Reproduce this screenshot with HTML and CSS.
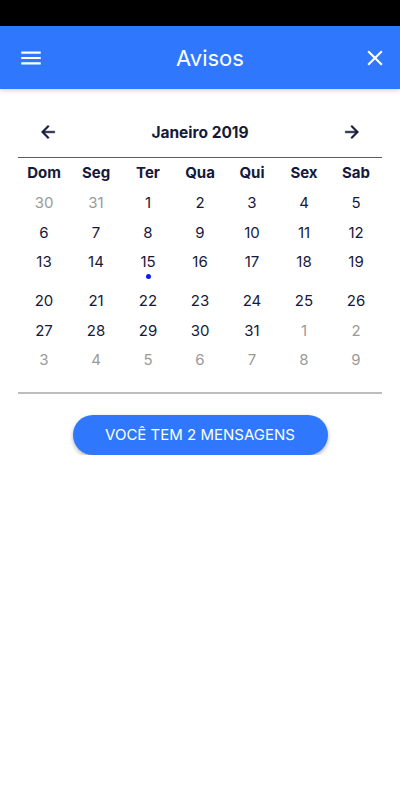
FILE: index.html
```html
<!DOCTYPE html>
<html>
<head>
  <title>Avisos</title>
  <link rel="stylesheet" href="styles.css">
</head>
<body>
  <div class="status-bar"></div>

  <header class="app-bar">
    <button class="icon-btn">
      <svg width="26" height="26" viewBox="0 0 24 24"><path d="M3 18h18v-2H3v2zm0-5h18v-2H3v2zm0-7v2h18V6H3z" fill="#fff"/></svg>
    </button>
    <h1>Avisos</h1>
    <button class="icon-btn">
      <svg width="26" height="26" viewBox="0 0 24 24"><path d="M19 6.41L17.59 5 12 10.59 6.41 5 5 6.41 10.59 12 5 17.59 6.41 19 12 13.41 17.59 19 19 17.59 13.41 12z" fill="#fff"/></svg>
    </button>
  </header>

  <main>
    <section class="calendar">
      <div class="month-bar">
        <button class="nav-btn">
          <svg width="20" height="20" viewBox="0 0 24 24"><path d="M20 11H7.83l5.59-5.59L12 4l-8 8 8 8 1.41-1.41L7.83 13H20v-2z" fill="#16193a" stroke="#16193a" stroke-width="0.6"/></svg>
        </button>
        <h2>Janeiro 2019</h2>
        <button class="nav-btn">
          <svg width="20" height="20" viewBox="0 0 24 24"><path d="M12 4l-1.41 1.41L16.17 11H4v2h12.17l-5.58 5.59L12 20l8-8z" fill="#16193a" stroke="#16193a" stroke-width="0.6"/></svg>
        </button>
      </div>

      <div class="weekdays">
        <span>Dom</span><span>Seg</span><span>Ter</span><span>Qua</span><span>Qui</span><span>Sex</span><span>Sab</span>
      </div>

      <div class="days" id="days"></div>
    </section>

    <div class="actions">
      <button class="messages-btn">VOCÊ TEM 2 MENSAGENS</button>
    </div>
  </main>

  <script>
    // Build the January 2019 grid (starts on Tuesday)
    var days = document.getElementById('days');
    var cells = [];
    cells.push({ n: 30, other: true }, { n: 31, other: true });
    for (var i = 1; i <= 31; i++) {
      cells.push({ n: i, other: false, event: i === 15 });
    }
    var next = 1;
    while (cells.length < 42) {
      cells.push({ n: next++, other: true });
    }

    for (var w = 0; w < 6; w++) {
      var row = document.createElement('div');
      row.className = 'week';
      var hasEvent = false;
      for (var d = 0; d < 7; d++) {
        var c = cells[w * 7 + d];
        var cell = document.createElement('div');
        cell.className = 'day' + (c.other ? ' other' : '');
        cell.innerHTML = '<span>' + c.n + '</span>';
        if (c.event) {
          cell.innerHTML += '<i class="dot"></i>';
          hasEvent = true;
        }
        row.appendChild(cell);
      }
      if (hasEvent) row.className += ' has-event';
      days.appendChild(row);
    }
  </script>
</body>
</html>
```

FILE: styles.css
```css
body {
  font-family: Inter, "Noto Sans", sans-serif;
  margin: 0;
  padding: 0;
  background-color: #FFFFFF;
  color: #16193a;
}

.status-bar {
  height: 26px;
  background-color: #000000;
}

.app-bar {
  height: 63px;
  background-color: #2f78fd;
  display: flex;
  align-items: center;
  justify-content: space-between;
  padding: 0 12px 0 18px;
  box-shadow: 0 2px 4px rgba(0, 0, 0, 0.15);
  position: relative;
}

.app-bar h1 {
  margin: 0;
  font-size: 22px;
  font-weight: 400;
  color: #FFFFFF;
  padding-left: 14px;
}

.icon-btn {
  background: none;
  border: none;
  padding: 0;
  width: 26px;
  height: 26px;
  display: flex;
  align-items: center;
  justify-content: center;
}

main {
  padding: 0 18px;
}

.calendar {
  padding-top: 31px;
  border-bottom: 2px solid #bdbdbd;
}

.month-bar {
  display: flex;
  align-items: center;
  justify-content: space-between;
  height: 24px;
  padding: 0 20px;
  border-bottom: 1px solid #5c5c5c;
  padding-bottom: 13px;
}

.month-bar h2 {
  margin: 0;
  font-size: 15.5px;
  font-weight: 700;
  padding-left: 0;
}

.nav-btn {
  background: none;
  border: none;
  padding: 0;
  display: flex;
}

.weekdays,
.week {
  display: grid;
  grid-template-columns: repeat(7, 1fr);
  text-align: center;
}

.weekdays {
  height: 29px;
  align-items: center;
  font-size: 15px;
  font-weight: 700;
  padding-bottom: 1px;
}

.days {
  padding-bottom: 17px;
}

.week {
  height: 29.5px;
  align-items: center;
  font-size: 15px;
}

.week.has-event {
  height: 39px;
  align-items: start;
}

.week.has-event .day {
  padding-top: 5px;
}

.day {
  display: flex;
  flex-direction: column;
  align-items: center;
}

.day.other {
  color: #9a9a9a;
}

.dot {
  width: 5px;
  height: 5px;
  border-radius: 50%;
  background-color: #0c1bf0;
  margin-top: 3px;
}

.actions {
  display: flex;
  justify-content: center;
  padding-top: 21px;
}

.messages-btn {
  width: 255px;
  height: 40px;
  border: none;
  border-radius: 20px;
  background-color: #2f78fd;
  color: #FFFFFF;
  font-family: Inter, "Noto Sans", sans-serif;
  font-size: 15px;
  font-weight: 400;
  box-shadow: 0 2px 4px rgba(0, 0, 0, 0.3);
}
```
